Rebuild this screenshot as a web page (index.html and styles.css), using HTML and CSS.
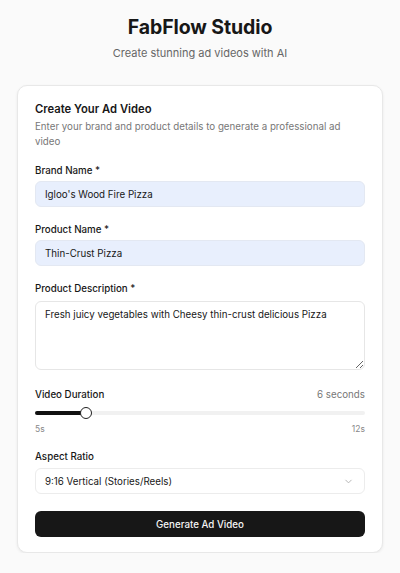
FILE: index.html
```html
<!DOCTYPE html>
<html lang="en">
<head>
<meta charset="utf-8">
<title>FabFlow Studio</title>
<link rel="stylesheet" href="styles.css">
</head>
<body>
<main class="page">
  <header class="hero">
    <h1 class="hero-title">FabFlow Studio</h1>
    <p class="hero-sub">Create stunning ad videos with AI</p>
  </header>
  <section class="card">
    <h2 class="card-title">Create Your Ad Video</h2>
    <p class="card-desc">Enter your brand and product details to generate a professional ad video</p>
    <form class="form">
      <div class="field">
        <label class="label">Brand Name *</label>
        <div class="input filled">Igloo's Wood Fire Pizza</div>
      </div>
      <div class="field">
        <label class="label">Product Name *</label>
        <div class="input filled">Thin-Crust Pizza</div>
      </div>
      <div class="field desc">
        <label class="label">Product Description *</label>
        <textarea class="textarea">Fresh juicy vegetables with Cheesy thin-crust delicious Pizza</textarea>
      </div>
      <div class="field duration">
        <div class="row">
          <span class="label">Video Duration</span>
          <span class="value">6 seconds</span>
        </div>
        <div class="slider">
          <div class="track"><div class="fill" style="width:15.4%"></div></div>
          <div class="thumb" style="left:15.4%"></div>
        </div>
        <div class="row ticks"><span>5s</span><span>12s</span></div>
      </div>
      <div class="field aspect">
        <label class="label">Aspect Ratio</label>
        <div class="select">
          <span>9:16 Vertical (Stories/Reels)</span>
          <svg class="chev" width="11" height="11" viewBox="0 0 24 24" fill="none" stroke="currentColor" stroke-width="2" stroke-linecap="round" stroke-linejoin="round"><path d="M6 9l6 6 6-6"/></svg>
        </div>
      </div>
      <button type="button" class="btn">Generate Ad Video</button>
    </form>
  </section>
</main>
</body>
</html>
```
FILE: styles.css
```css
* { box-sizing: border-box; }
html, body { margin: 0; padding: 0; }
body {
  background: #fafafa;
  font-family: Inter, "Noto Sans", sans-serif;
  color: #171717;
}
.page {
  padding: 15px 17px 0;
}
.hero { text-align: center; }
.hero-title {
  margin: 0;
  font-size: 19.5px;
  line-height: 24px;
  font-weight: 700;
  letter-spacing: -0.1px;
}
.hero-sub {
  margin: 6px 0 0;
  font-size: 11px;
  line-height: 16px;
  color: #666;
}
.card {
  margin-top: 24px;
  background: #fff;
  border: 1px solid #e8e8e8;
  border-radius: 10px;
  box-shadow: 0 1px 3px rgba(0,0,0,0.07);
  padding: 15px 17px 15px;
}
.card-title {
  margin: 0;
  font-size: 11.25px;
  line-height: 16px;
  font-weight: 600;
}
.card-desc {
  margin: 2px 0 0;
  font-size: 9.75px;
  line-height: 15px;
  color: #777;
}
.form {
  margin-top: 14px;
  display: flex;
  flex-direction: column;
}
.field {
  display: flex;
  flex-direction: column;
  gap: 2px;
  margin-bottom: 15px;
}
.label {
  font-size: 9.75px;
  line-height: 16px;
  font-weight: 500;
  color: #171717;
}
.input {
  height: 26px;
  border-radius: 6px;
  border: 1px solid #e3e8f2;
  padding: 0 9px;
  display: flex;
  align-items: center;
  font-size: 9.75px;
}
.filled { background: #e8effd; }
.desc { gap: 4px; }
.textarea {
  display: block;
  height: 69px;
  border: 1px solid #e6e6e6;
  border-radius: 6px;
  padding: 6px 9px;
  font-family: inherit;
  font-size: 9.75px;
  line-height: 14px;
  color: #171717;
  resize: vertical;
  background: #fff;
}
.duration { gap: 0; margin-top: 2px; margin-bottom: 14px; }
.row { display: flex; justify-content: space-between; align-items: center; }
.value { font-size: 9.75px; line-height: 16px; color: #777; }
.slider {
  position: relative;
  height: 18px;
  margin-top: 1px;
  display: flex;
  align-items: center;
}
.track {
  width: 100%;
  height: 3.5px;
  background: #f1f1f1;
  border-radius: 2px;
  overflow: hidden;
}
.fill { height: 100%; background: #111; }
.thumb {
  position: absolute;
  top: 3px;
  width: 12px;
  height: 12px;
  margin-left: -6px;
  border-radius: 50%;
  background: #fff;
  border: 1.5px solid #222;
}
.ticks { font-size: 8.5px; line-height: 12px; color: #888; margin-top: 1px; }
.aspect { gap: 3px; margin-bottom: 17px; }
.select {
  height: 26px;
  border: 1px solid #ececec;
  border-radius: 6px;
  padding: 0 9px;
  display: flex;
  align-items: center;
  justify-content: space-between;
  font-size: 9.75px;
  background: #fff;
}
.chev { color: #b0b0b0; margin-right: 1px; }
.btn {
  height: 26px;
  border: 0;
  border-radius: 6px;
  background: #171717;
  color: #f5f5f5;
  font-family: inherit;
  font-size: 9.75px;
  font-weight: 500;
}
```
